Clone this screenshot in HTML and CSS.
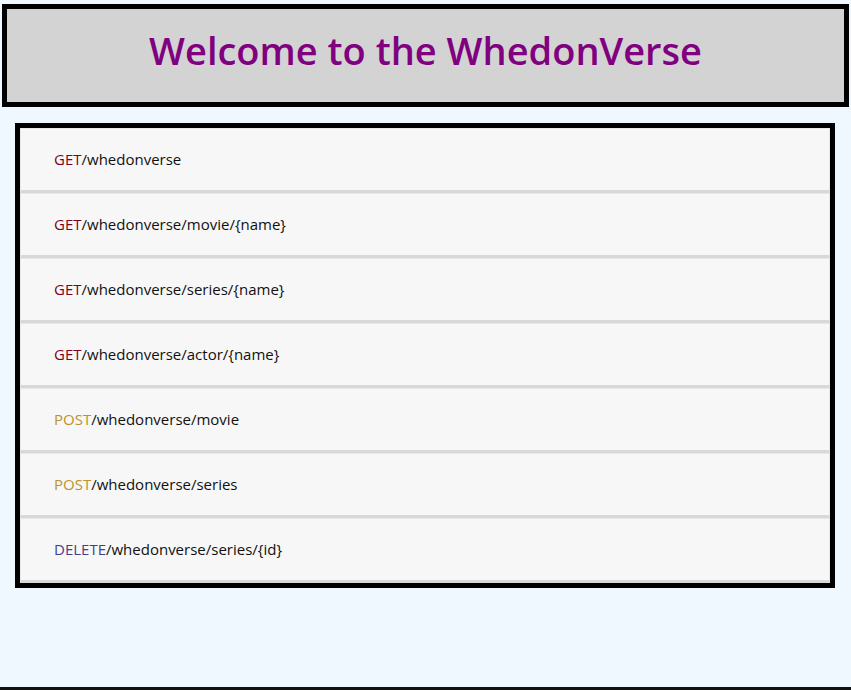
FILE: index.html
```html
<!DOCTYPE html>
<html lang="en">
<head>
<meta charset="utf-8">
<title>WhedonVerse</title>
<link rel="stylesheet" href="styles.css">
</head>
<body>
<header class="banner">
  <h1 class="title">Welcome to the WhedonVerse</h1>
</header>
<main class="endpoints">
  <div class="endpoint"><span class="verb get">GET</span><span class="path">/whedonverse</span></div>
  <div class="endpoint"><span class="verb get">GET</span><span class="path">/whedonverse/movie/{name}</span></div>
  <div class="endpoint"><span class="verb get">GET</span><span class="path">/whedonverse/series/{name}</span></div>
  <div class="endpoint"><span class="verb get">GET</span><span class="path">/whedonverse/actor/{name}</span></div>
  <div class="endpoint"><span class="verb post">POST</span><span class="path">/whedonverse/movie</span></div>
  <div class="endpoint"><span class="verb post">POST</span><span class="path">/whedonverse/series</span></div>
  <div class="endpoint"><span class="verb delete">DELETE</span><span class="path">/whedonverse/series/{id}</span></div>
</main>
<footer class="footer"></footer>
</body>
</html>
```
FILE: styles.css
```css
html, body {
  margin: 0;
  padding: 0;
}
body {
  background: #f0f8ff;
  padding: 4px 2px 0;
  font-family: "Open Sans", "Noto Sans", sans-serif;
  display: flex;
  flex-direction: column;
}
.banner {
  border: 5px solid #000;
  background: #d3d3d3;
  height: 93px;
  display: flex;
  align-items: center;
  justify-content: center;
}
.title {
  margin: 0;
  font-size: 38px;
  font-weight: 600;
  color: #800080;
  line-height: 1;
  padding-bottom: 12px;
}
.endpoints {
  margin: 16px 14px 0 13px;
  border: 5px solid #000;
  display: flex;
  flex-direction: column;
}
.endpoint {
  background: #f7f7f7;
  border: 1px solid #e8e8e8;
  border-bottom: 3px solid #d8d8d8;
  height: 60px;
  padding: 0 0 1px 33px;
  display: flex;
  align-items: center;
  font-size: 15px;
  color: #111;
}
.verb.get { color: #800020; }
.verb.post { color: #c0912a; }
.verb.delete { color: #483d8b; }
.footer {
  margin: 99px -2px 0;
  border-top: 4px solid #111;
  height: 10px;
}
```
